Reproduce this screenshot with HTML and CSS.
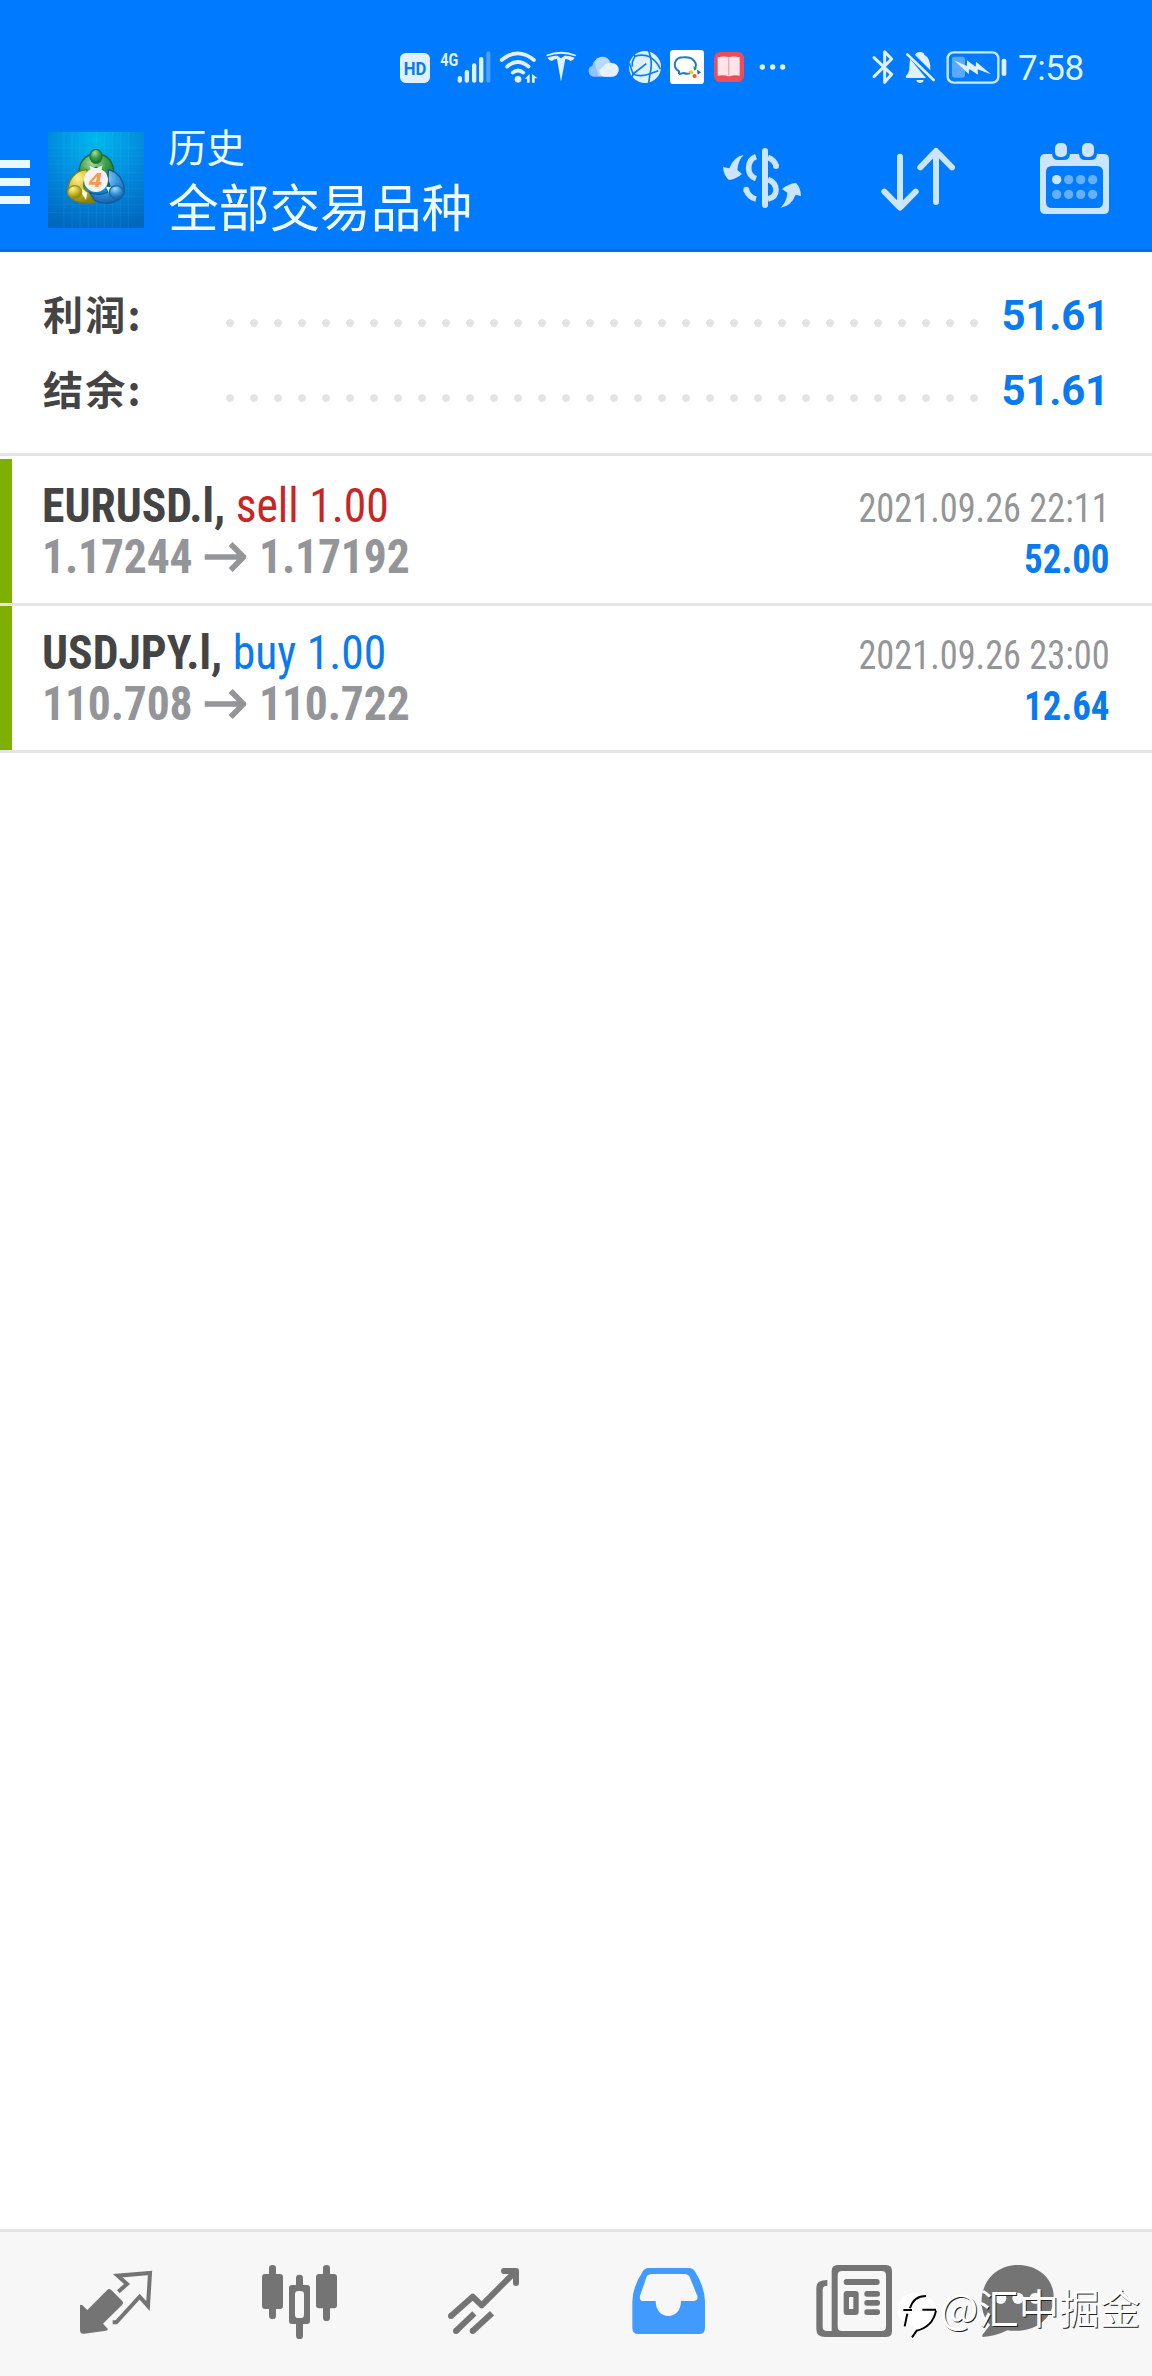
FILE: index.html
```html
<!DOCTYPE html>
<html lang="zh-CN">
<head>
<meta charset="utf-8">
<title>历史</title>
<link rel="stylesheet" href="styles.css">
</head>
<body>
<header class="top">
  <div class="status">
    <svg class="status-left" viewBox="0 0 1260 240" fill="#dff1ff">
      <rect x="60" y="69" width="90" height="90" rx="17"/>
      <text class="hd" x="105" y="136" text-anchor="middle" textLength="68" lengthAdjust="spacingAndGlyphs">HD</text>
      <text class="fourg" x="181" y="107" textLength="54" lengthAdjust="spacingAndGlyphs">4G</text>
      <rect x="233" y="138" width="13" height="20" rx="6"/><rect x="254" y="120" width="13" height="38" rx="6"/><rect x="276" y="100" width="13" height="58" rx="6"/><rect x="297" y="81" width="13" height="77" rx="6"/><rect x="319" y="64" width="12" height="94" rx="6" opacity=".35"/>
      <g fill="none" stroke="#dff1ff" stroke-width="11" stroke-linecap="round"><path d="M365 90Q413 50 462 90M381 110Q413 82 446 110M398 128Q414 115 430 128"/></g>
      <circle cx="414" cy="148" r="10"/><path d="M434 146L449 132V158H441V146ZM456 132L473 145H464V158H456Z"/>
      <path d="M498 75Q543 56 589 75L586 79Q543 63 501 79ZM502 83Q520 76 532 77L543 85L554 77Q568 76 584 83Q580 92 571 93Q566 87 556 87L543 155L531 87Q520 87 516 93Q506 91 502 83Z"/>
      <path d="M642 140A17 17 0 0 1 637 107A30 30 0 0 1 694 101A20 20 0 0 1 696 140Z" fill="#8fc3ff"/><path d="M655 138L644 98A24 24 0 0 1 688 92L686 102L672 138Z" fill="#b8d9ff"/><path d="M672 140A18 18 0 0 1 658 120L676 103A22 22 0 0 1 696 99A20 20 0 0 1 696 140Z" fill="#e4f2ff"/>
      <circle cx="795" cy="111" r="48"/><path d="M765 79Q790 70 812 82Q834 98 841 118M806 62L812 82Q816 108 810 131L806 160M758 68L765 79Q754 96 757 110M748 100L759 132Q780 142 810 131L835 122M759 132L799 101M759 132L756 142" fill="none" stroke="#087cf5" stroke-width="5"/>
      <rect x="870" y="60" width="102" height="102" rx="10" fill="#fff"/><path d="M897 132V124C875 109 883 82 911 82C942 80 955 102 943 118M897 132L912 129Q922 134 931 129" fill="none" stroke="#207bc7" stroke-width="6"/><path d="M940 108L950 117L943 122Z" fill="#20a34a"/><path d="M951 119L963 127L953 134Z" fill="#1769aa"/><path d="M925 124L936 120L941 130L931 133Z" fill="#ffc51d"/><circle cx="944" cy="138" r="6" fill="#f05b32"/>
      <rect x="1002" y="66" width="90" height="90" rx="19" fill="#ee4d5a"/><path d="M1013 82Q1034 77 1046 82Q1059 77 1079 82V137Q1059 134 1050 139H1043Q1034 134 1013 137Z" fill="#ffe5e9"/><path d="M1046 83V136" stroke="#f7a6b0" stroke-width="4"/>
      <circle cx="1147" cy="111" r="8"/><circle cx="1178" cy="111" r="8"/><circle cx="1208" cy="111" r="8"/>
    </svg>
    <svg class="status-right" viewBox="0 0 510 240" fill="#dff1ff">
      <path d="M102 83L155 133L134 157V65L155 87L102 140" fill="none" stroke="#dff1ff" stroke-width="9" stroke-linecap="round" stroke-linejoin="round"/>
      <path d="M225 75Q228 66 240 66Q252 66 253 74Q273 84 271 121ZM210 86L258 144H198V137Q208 130 208 110ZM229 150H251Q249 159 240 159Q231 159 229 150Z"/><path d="M202 73L281 150" stroke="#dff1ff" stroke-width="8" stroke-linecap="round"/>
      <rect x="323" y="67" width="152" height="91" rx="18" fill="none" stroke="#cfe8ff" stroke-width="7"/><rect x="336" y="80" width="39" height="63" rx="7" opacity=".4"/><path d="M342 91L381 108V91L407 110L408 95L453 133L413 118L414 134L388 117L386 132Z"/><rect x="485" y="86" width="14" height="52" rx="6"/>
    </svg>
    <span class="clock">7:58</span>
  </div>
  <div class="bar">
    <div class="menu"><i></i><i></i><i></i></div>
    <svg class="logo" viewBox="24 24 288 288">
      <defs>
        <radialGradient id="bg" cx=".5" cy=".08" r=".95"><stop offset="0" stop-color="#00b8ee"/><stop offset=".55" stop-color="#0288dc"/><stop offset="1" stop-color="#0068bd"/></radialGradient>
        <radialGradient id="g" cx=".4" cy=".25" r=".8"><stop offset="0" stop-color="#a5dc98"/><stop offset=".5" stop-color="#3d9b48"/><stop offset="1" stop-color="#126b2a"/></radialGradient>
        <radialGradient id="y" cx=".35" cy=".25" r=".8"><stop offset="0" stop-color="#fff195"/><stop offset=".5" stop-color="#cdbd2c"/><stop offset="1" stop-color="#827b0e"/></radialGradient>
        <radialGradient id="b" cx=".4" cy=".25" r=".8"><stop offset="0" stop-color="#a6dcff"/><stop offset=".5" stop-color="#3a98db"/><stop offset="1" stop-color="#0d5eaa"/></radialGradient>
      </defs>
      <rect x="24" y="24" width="288" height="288" fill="url(#bg)"/>
      <path d="M72 24V312M96 24V312M120 24V312M145 24V312M169 24V312M193 24V312M217 24V312M241 24V312M265 24V312M24 72H312M24 96H312M24 120H312M24 145H312M24 169H312M24 193H312M24 217H312M24 241H312M24 265H312" stroke="#6cc9ff" stroke-opacity=".16" stroke-width="2"/>
      <g stroke-width="4">
        <path d="M116 150C116 112 138 90 168 90C205 90 222 115 221 150Q220 180 205 193L190 140Q168 119 148 143L124 150Z" fill="url(#g)" stroke="#17682e"/>
        <path d="M140 137C103 140 82 168 84 207C90 229 120 242 164 236L172 219L153 206Q125 198 132 174L148 163Z" fill="url(#y)" stroke="#817b11"/>
        <path d="M205 137C235 144 256 173 252 207C241 235 200 246 165 230L148 205Q185 218 207 201Q214 188 204 172Z" fill="url(#b)" stroke="#14589d"/>
        <path d="M148 125L168 133L188 124L183 142H153ZM117 188L142 207L138 228L126 209ZM198 188L217 190L207 208Z" fill="#f3f8df" stroke="none"/>
        <ellipse cx="168" cy="97" rx="18" ry="21" fill="url(#g)" stroke="#1c743a"/>
        <ellipse cx="104" cy="204" rx="21" ry="19" fill="url(#y)" stroke="#97901e"/>
        <ellipse cx="229" cy="204" rx="21" ry="19" fill="url(#b)" stroke="#1b66a8"/>
      </g>
      <circle cx="168" cy="168" r="36" fill="#f4f2f2"/>
      <text class="four" x="168" y="189" text-anchor="middle">4</text>
    </svg>
    <div class="titles"><div class="sub">历史</div><div class="main">全部交易品种</div></div>
    <svg class="act a1" viewBox="0 0 510 387" fill="#cce5ff">
      <rect x="216" y="84" width="18" height="180" rx="9"/>
      <path d="M198 110Q176 118 176 144Q176 168 198 176M168 209Q177 232 198 237M234 112Q253 119 259 139M234 178Q258 187 258 211Q258 232 234 237" fill="none" stroke="#cce5ff" stroke-width="17"/><circle cx="258" cy="138" r="9"/><circle cx="169" cy="209" r="9"/>
      <path d="M161 105Q132 109 118 145L99 141Q101 167 117 180Q136 179 156 162L142 150Q144 121 161 105ZM272 263Q303 259 317 224L333 228Q332 203 318 189Q296 190 276 207L292 218Q291 243 272 263Z"/>
    </svg>
    <svg class="act a2" viewBox="510 0 390 387" fill="none" stroke="#cce5ff" stroke-width="18" stroke-linecap="round" stroke-linejoin="round"><path d="M630 110V260M583 215L630 263L677 215M738 246V96M691 142L738 93L786 142"/></svg>
    <svg class="act a3" viewBox="900 0 486 387" fill="#cce5ff">
      <path fill-rule="evenodd" d="M1066 102H1086Q1088 120 1104 120H1122Q1139 120 1140 102H1167Q1168 120 1185 120H1203Q1220 120 1221 102H1241Q1257 102 1257 118V266Q1257 282 1241 282H1066Q1050 282 1050 266V118Q1050 102 1066 102ZM1086 138Q1068 138 1068 156V246Q1068 264 1086 264H1221Q1239 264 1239 246V156Q1239 138 1221 138Z"/>
      <rect x="1095" y="69" width="36" height="42" rx="15"/><rect x="1176" y="69" width="36" height="42" rx="15"/>
      <circle cx="1100" cy="179" r="14"/><g fill="#66b0ff"><circle cx="1136" cy="179" r="14"/><circle cx="1172" cy="179" r="14"/><circle cx="1208" cy="179" r="14"/><circle cx="1100" cy="223" r="14"/><circle cx="1136" cy="223" r="14"/><circle cx="1172" cy="223" r="14"/><circle cx="1208" cy="223" r="14"/></g>
    </svg>
  </div>
</header>

<section class="summary">
  <div class="sum-row"><b class="label">利润:</b><span class="dots"></span><b class="total">51.61</b></div>
  <div class="sum-row"><b class="label">结余:</b><span class="dots"></span><b class="total">51.61</b></div>
</section>

<main class="deals">
  <article class="deal first">
    <div class="left"><div class="line"><b>EURUSD.l,</b> <span class="sell">sell 1.00</span></div>
      <div class="line price"><b>1.17244</b><svg class="arrow" viewBox="0 0 126 90" preserveAspectRatio="none"><path d="M0 45H116M79 6L118 45L79 84" fill="none" stroke="#949599" stroke-width="17"/></svg><b>1.17192</b></div></div>
    <div class="right"><div class="time">2021.09.26 22:11</div><b class="profit">52.00</b></div>
  </article>
  <article class="deal">
    <div class="left"><div class="line"><b>USDJPY.l,</b> <span class="buy">buy 1.00</span></div>
      <div class="line price"><b>110.708</b><svg class="arrow" viewBox="0 0 126 90" preserveAspectRatio="none"><path d="M0 45H116M79 6L118 45L79 84" fill="none" stroke="#949599" stroke-width="17"/></svg><b>110.722</b></div></div>
    <div class="right"><div class="time">2021.09.26 23:00</div><b class="profit">12.64</b></div>
  </article>
</main>

<nav class="tabs">
  <svg viewBox="0 48 621 432" fill="#747474">
    <path d="M240 268Q242 264 247 268L262 282L321 223Q327 216 334 222L366 254Q372 260 366 267L309 323L323 338Q325 343 318 344L253 353Q240 355 240 342Z"/>
    <path d="M355 227L381 204L353 179L450 171L444 270L419 242L349 319H338" fill="none" stroke="#747474" stroke-width="12" stroke-linejoin="miter"/>
  </svg>
  <svg viewBox="621 48 552 432" fill="#747474">
    <rect x="786" y="174" width="63" height="105" rx="9"/><rect x="807" y="147" width="21" height="162" rx="10"/><rect x="948" y="174" width="63" height="103" rx="9"/><rect x="969" y="147" width="21" height="168" rx="10"/><rect x="888" y="176" width="21" height="40" rx="10"/><rect x="888" y="315" width="21" height="54" rx="10"/><path fill-rule="evenodd" d="M876 207H921Q930 207 930 216V315Q930 324 921 324H876Q867 324 867 315V216Q867 207 876 207ZM895 225Q885 225 885 235V296Q885 306 895 306H902Q912 306 912 296V235Q912 225 902 225Z"/>
  </svg>
  <svg viewBox="-27 48 555 432" fill="none" stroke="#747474" stroke-width="18" stroke-linejoin="round"><path d="M153 300L218 242L245 268L344 169M312 165H348V201M168 345L223 292M218 345L276 292"/><g fill="#747474" stroke="none"><circle cx="153" cy="300" r="9"/><circle cx="168" cy="345" r="9"/><circle cx="218" cy="345" r="9"/><circle cx="312" cy="165" r="9"/><circle cx="348" cy="201" r="9"/></g></svg>
  <svg viewBox="528 48 552 432"><path fill="#419bff" fill-rule="evenodd" d="M745 156H867Q879 156 886 168Q915 215 915 258V335Q915 354 896 354H716Q697 354 697 335V258Q697 215 726 170Q733 156 745 156ZM757 174Q744 174 740 182L720 239Q717 255 731 255H767C767 315 843 315 843 255H880Q895 255 892 240L870 185Q866 174 852 174Z"/></svg>
  <svg viewBox="0 48 555 432" fill="#747474">
    <path fill-rule="evenodd" d="M233 147H378Q396 147 396 165V345Q396 363 378 363H195Q169 363 169 339V214Q169 192 202 192V209Q188 209 188 221V333Q188 345 202 345H215V165Q215 147 233 147ZM246 165Q233 165 233 178V332Q233 345 246 345H365Q378 345 378 332V178Q378 165 365 165Z"/>
    <rect x="251" y="189" width="108" height="18" rx="9"/><path fill-rule="evenodd" d="M260 225H287Q296 225 296 234V288Q296 297 287 297H260Q251 297 251 288V234Q251 225 260 225ZM267 243V279H280V243Z"/><rect x="313" y="225" width="47" height="17" rx="8"/><rect x="313" y="252" width="47" height="17" rx="8"/><rect x="313" y="280" width="47" height="17" rx="8"/>
  </svg>
  <svg viewBox="555 48 621 432"><path fill="#747474" d="M774 147C835 147 881 188 881 243C881 316 815 353 742 343Q707 361 667 363V357L690 327C635 263 672 147 774 147Z"/><g fill="#f7f7f7"><circle cx="722" cy="247" r="17"/><circle cx="774" cy="247" r="17"/><circle cx="826" cy="247" r="17"/></g></svg>
</nav>
<div class="mark">
  <svg viewBox="411 225 123 144"><circle cx="462" cy="280" r="49" fill="#fff"/><path d="M470 235Q527 238 530 285Q528 325 477 342L456 364L460 330Z" fill="#fff"/><path d="M434 331L442 293M430 282H456M450 277Q461 240 498 240M487 281H528M528 284Q518 333 470 344L456 364" fill="none" stroke="#000" stroke-width="6"/></svg>
  <span>@汇中掘金</span>
</div>
</body>
</html>
```
FILE: styles.css
```css
* { box-sizing: border-box; }
body { margin: 0; width: 1152px; height: 2376px; display: flex; flex-direction: column; background: #fff; font-family: Roboto, "Noto Sans CJK SC", sans-serif; color: #444; position: relative; overflow: hidden; }
svg { display: block; flex: none; }
.top { height: 252px; background: #007aff; border-bottom: 3px solid #0f6ddb; }
.status { height: 120px; padding: 30px 0 0 380px; display: flex; }
.status-left { width: 420px; height: 80px; margin-right: 40px; }
.status-right { width: 170px; height: 80px; }
.hd { font: 700 54px Roboto, sans-serif; fill: #087cf5; }
.fourg { font: 700 57px Roboto, sans-serif; }
.clock { font-size: 35px; line-height: 42px; margin: 18px 0 0 8px; color: #dff1ff; letter-spacing: -.4px; white-space: nowrap; }
.bar { height: 129px; display: flex; }
.menu { width: 30px; margin-right: 18px; padding-top: 40px; display: flex; flex-direction: column; gap: 10px; }
.menu i { height: 8px; background: #e9f7ff; }
.logo { width: 96px; height: 96px; margin-top: 12px; }
.four { font: italic 700 60px "DejaVu Sans", sans-serif; fill: #f59a4a; }
.titles { width: 546px; padding-left: 24px; color: #f0fbff; font-family: "Noto Sans CJK SC", sans-serif; }
.sub { font-size: 38.5px; line-height: 50px; height: 53px; }
.main { font-size: 50.7px; line-height: 64px; }
.act { height: 129px; }
.a1 { width: 170px; }
.a2 { width: 130px; }
.a3 { width: 162px; }
.summary { height: 204px; padding: 26px 43px 0 42px; border-bottom: 3px solid #e4e4e4; }
.sum-row { height: 75px; display: flex; }
.label { width: 176px; padding-left: 1px; font: 700 40px/71px "Noto Sans CJK SC", sans-serif; letter-spacing: 2.2px; }
.dots { width: 768px; height: 24px; margin-top: 33px; background: radial-gradient(circle at 12px 12px, #e3e3e3 3.5px, transparent 4.3px) 0 0 / 24px 24px; }
.total { flex: 1; text-align: right; font-size: 42px; line-height: 75px; letter-spacing: -.2px; color: #0a7af0; }
.deals { flex: 1; }
.deal { height: 147px; padding: 0 42px; border-bottom: 3px solid #e4e4e4; background: linear-gradient(#7fb000, #7fb000) 0 0 / 12px 100% no-repeat; display: flex; justify-content: space-between; font-family: "Roboto Condensed", Roboto, sans-serif; font-stretch: 75%; }
.first { height: 150px; padding-top: 3px; background-position: 0 3px; }
.left { padding-top: 21px; transform: scaleX(.95); transform-origin: left; }
.line { font-size: 48px; line-height: 51px; white-space: nowrap; }
.sell { color: #c92525; }
.buy { color: #0a7af0; }
.price { color: #949599; display: flex; align-items: center; letter-spacing: -.15px; }
.arrow { width: 44px; height: 30px; margin: 0 13px 0 13px; }
.right { padding-top: 24px; text-align: right; line-height: 51px; font-size: 40px; }
.time { color: #949599; transform: scaleX(.908); transform-origin: right; }
.profit { color: #0a7af0; display: block; transform: scaleX(.925); transform-origin: right; }
.tabs { height: 147px; border-top: 3px solid #e4e4e4; background: #f7f7f7; display: grid; grid-template-columns: 207px 184px 185px 184px 185px 207px; }
.tabs svg { width: 100%; height: 144px; }
.mark { position: absolute; left: 897px; top: 2289px; display: flex; color: #fff; }
.mark svg { width: 41px; height: 48px; margin-top: 2px; }
.mark span { font: 400 40.5px/48px "Noto Sans CJK SC", sans-serif; margin: -6px 0 0 2px; text-shadow: 1px 1px 0 #222; white-space: nowrap; }
```
